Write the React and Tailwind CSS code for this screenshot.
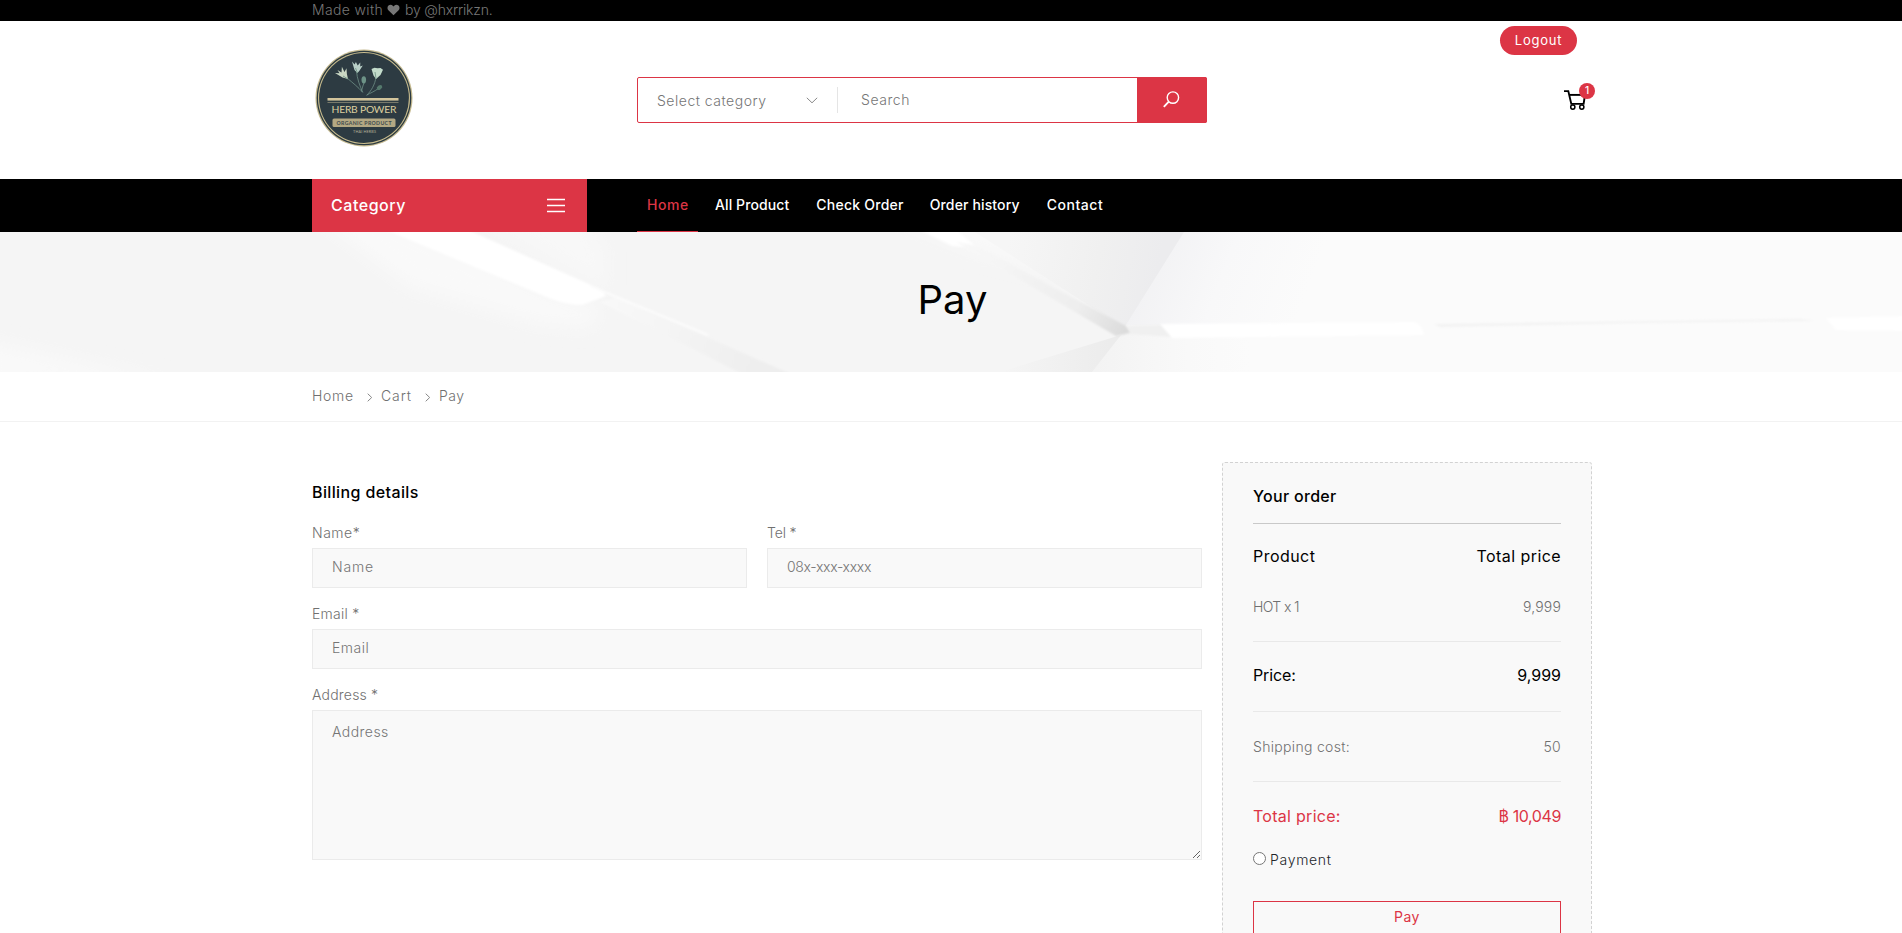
const navItems = [
  { label: "All Product", style: "ml-[17px] tracking-[0.1px]" },
  { label: "Check Order", style: "ml-[27px] tracking-[0.24px]" },
  { label: "Order history", style: "ml-[26px] tracking-[0.14px]" },
  { label: "Contact", style: "ml-[27px] tracking-[0.55px]" },
];

function Heart() {
  return (
    <svg width="13" height="12" viewBox="0 0 13 12" className="mx-[4px]">
      <path
        d="M6.500 11.300 1.400 6.300C.1 5 .2 2.600 1.500 1.400 2.900.2 4.700.5 5.800 1.700l.7.7.7-.7C8.300.5 10.100.2 11.500 1.400c1.300 1.200 1.400 3.600.1 4.900z"
        fill="#777"
      />
    </svg>
  );
}

function Logo() {
  return (
    <svg width="98" height="98" viewBox="0 0 98 98">
      <circle cx="49" cy="49" r="48.500" fill="#c4b98f" />
      <circle cx="49" cy="49" r="47.300" fill="#2b3a41" />
      <circle cx="49" cy="49" r="46" fill="#c9bd8e" />
      <circle cx="49" cy="49" r="44.900" fill="#2d3b42" />
      <g fill="none" stroke="#6f8f86" strokeWidth="0.8" strokeLinecap="round">
        <path d="M32 29 C38 34 43 38 47.500 43" />
        <path d="M41.500 22 C42 30 45 37 47.500 43" />
        <path d="M49 34 C48 37 47 39 46.500 42" />
        <path d="M61 28 C60 36 56 42 52 46" />
        <path d="M64 39 C59 43 55 44 52 46" />
      </g>
      <path
        d="M33 30 27.500 28.500 20 24l4.500.2-2-3.200 4 2.400.4-5.600 2.600 5.200 2-3.800.4 5.800z"
        fill="#cbd8c4"
      />
      <path d="M42.500 24 39.500 21l-2.500-8.500 2.600 3 1.300-2.600 1.800 3.600 2.600-3-.1 4 2.600-1-3.200 5z" fill="#b9d0c8" />
      <path d="M61 30 58.500 26.500l-2-6.500 3-1.200 3 .5 3-.3 2.500 1.800-2.500 5.200z" fill="#c3dccb" />
      <path d="M28 27l5 3M40.500 19l2 5M60 23l1 6.500" stroke="#7fa091" strokeWidth="1" />
      <ellipse cx="48.800" cy="30.800" rx="2.300" ry="3.600" fill="#6d9387" />
      <ellipse cx="64.500" cy="38.500" rx="3" ry="2.100" transform="rotate(-35 64.500 38.500)" fill="#54796c" />
      <rect x="12.500" y="49" width="71" height="2.600" fill="#d2c49b" />
      <rect x="12.500" y="53" width="71" height="0.800" fill="#8b8b76" />
      <text x="49" y="63.900" fontSize="10.300" fontWeight="400" textAnchor="middle" textLength="65" fontFamily="Lato, sans-serif" fill="#dccf9f">
        HERB POWER
      </text>
      <rect x="17.500" y="69.500" width="63" height="8.500" rx="1.500" fill="#b3a883" />
      <text x="49" y="75.700" fontSize="5.200" fontWeight="700" textAnchor="middle" textLength="55" fontFamily="Lato, sans-serif" fill="#3d4a4d">
        ORGANIC PRODUCT
      </text>
      <text x="49.500" y="83.600" fontSize="3.800" fontWeight="400" textAnchor="middle" textLength="23" fontFamily="Lato, sans-serif" fill="#b5b298">
        THAI HERBS
      </text>
    </svg>
  );
}

function Cart() {
  return (
    <svg width="22" height="20" viewBox="0 0 22 20" fill="none" stroke="#000">
      <path d="M0 1.100H4.300L7.300 13.900H19.600L21 5" strokeWidth="1.900" />
      <path d="M5.500 4.900H18" strokeWidth="1.900" />
      <circle cx="8.800" cy="17.100" r="2.100" strokeWidth="1.500" />
      <circle cx="17.800" cy="17.100" r="2.100" strokeWidth="1.500" />
    </svg>
  );
}

function BannerArt() {
  return (
    <svg width="1902" height="140" viewBox="0 0 1902 140" preserveAspectRatio="none" className="col-start-1 row-start-1">
      <defs>
        <linearGradient id="foldTop" x1="1010" x2="1160" y1="0" y2="30" gradientUnits="userSpaceOnUse">
          <stop offset="0" stopColor="#f6f6f6" />
          <stop offset="0.600" stopColor="#f0f0f0" />
          <stop offset="1" stopColor="#ececee" />
        </linearGradient>
        <linearGradient id="wallTop" x1="1140" x2="1300" y1="20" y2="80" gradientUnits="userSpaceOnUse">
          <stop offset="0" stopColor="#f1f1f3" />
          <stop offset="0.500" stopColor="#f8f8f9" />
          <stop offset="1" stopColor="#fbfbfb" />
        </linearGradient>
        <linearGradient id="foldBottom" x1="1000" x2="1110" y1="0" y2="0" gradientUnits="userSpaceOnUse">
          <stop offset="0" stopColor="#f5f5f5" />
          <stop offset="1" stopColor="#ececec" />
        </linearGradient>
        <linearGradient id="wallBottom" x1="1095" x2="1250" y1="0" y2="0" gradientUnits="userSpaceOnUse">
          <stop offset="0" stopColor="#f3f3f3" />
          <stop offset="0.600" stopColor="#f9f9f9" />
          <stop offset="1" stopColor="#fbfbfb" />
        </linearGradient>
        <linearGradient id="beam" x1="963" x2="1124" y1="13" y2="103" gradientUnits="userSpaceOnUse">
          <stop offset="0" stopColor="#f8f8f8" />
          <stop offset="0.700" stopColor="#eeeeee" />
          <stop offset="1" stopColor="#dcdcdc" />
        </linearGradient>
        <linearGradient id="tail" x1="600" x2="760" y1="70" y2="140" gradientUnits="userSpaceOnUse">
          <stop offset="0" stopColor="#f9f9f9" />
          <stop offset="1" stopColor="#eeeeee" />
        </linearGradient>
        <filter id="soft" x="-5%" y="-20%" width="110%" height="140%">
          <feGaussianBlur stdDeviation="1.200" />
        </filter>
        <filter id="haze" x="-20%" y="-40%" width="140%" height="180%">
          <feGaussianBlur stdDeviation="9" />
        </filter>
      </defs>
      <rect width="1902" height="140" fill="#f5f5f5" />
      <g filter="url(#haze)">
        <path d="M310 -20H388L549 62L600 75L590 96L540 92L410 55Z" fill="#f9f9f9" />
        <path d="M470 -20H580L605 20V55Z" fill="#f8f8f8" />
        <path d="M-20 108L170 150H-20Z" fill="#f9f9f9" />
        <path d="M880 -20H1010L1060 40L980 20Z" fill="#f9f9f9" />
      </g>
      <path d="M1124 93L1184 0H1902V93Z" fill="url(#wallTop)" />
      <path d="M1121 93L1092 140H1902V93Z" fill="url(#wallBottom)" />
      <path d="M975 0H1184L1124 96Z" fill="url(#foldTop)" />
      <path d="M1121 103L1092 140H1000Z" fill="url(#foldBottom)" />
      <g filter="url(#soft)">
        <path d="M600 70L618 66L800 146H750Z" fill="url(#tail)" />
        <path d="M386 -2H468L600 57L606 64L582 73Q566 73 549 66Z" fill="#fff" />
        <path d="M590 54L708 103" stroke="#fcfcfc" strokeWidth="2" />
        <path d="M920 -2H956L978 16L952 14Z" fill="#fff" />
        <path d="M956 10L974 13L1126 94L1130 101L1116 104Z" fill="url(#beam)" />
        <path d="M1128 94L1163 93L1172 105L1130 102Z" fill="#f0f0f0" />
        <path d="M1160 92L1414 90Q1422 92 1424 103L1172 106Z" fill="#fff" />
        <path d="M1434 92L1800 87L1815 89L1640 91L1440 95Z" fill="#f3f3f3" />
        <path d="M1826 86L1904 84V99L1836 98Z" fill="#fff" />
      </g>
    </svg>
  );
}

function CrumbArrow() {
  return (
    <svg width="6" height="9" viewBox="0 0 6 9" className="mt-[3px] mr-[8px]" fill="none" stroke="#888" strokeWidth="1">
      <path d="M0.700 0.700L4.700 4.500L0.700 8.300" />
    </svg>
  );
}

const labelBase = "block h-6 leading-6 mb-[3px] ";
const inputBase =
  "block h-10 w-full border border-[#ebebeb] bg-[#f9f9f9] pb-[3px] pl-[19px] font-light text-sm outline-none placeholder:text-[#757575] ";

export default function App() {
  return (
    <div className="h-[933px] overflow-hidden bg-white font-['Inter','Liberation_Sans',sans-serif] text-sm font-light text-[#707070]">
      <div className="h-[21px] bg-black">
        <div className="ml-[312px] flex h-[20px] items-center text-[#777]">
          <span className="tracking-[0.35px]">Made with</span>
          <Heart />
          <span className="ml-px tracking-[-0.19px]">by @hxrrikzn.</span>
        </div>
      </div>

      <header className="ml-[312px] flex h-[158px] w-[1280px]">
        <div className="w-[325px] pt-[28px] pl-[3px]">
          <Logo />
        </div>
        <div className="mt-[56px] flex h-[46px] w-[570px] rounded-[2px] border border-[#dc3545]">
          <div className="mt-[9px] flex h-[26px] w-[200px] shrink-0 items-center border-r border-[#e5e5e5] pl-[19px]">
            <span className="mt-[2px] w-[149px] tracking-[0.51px] text-[#757575]">Select category</span>
            <svg width="12" height="7" viewBox="0 0 12 7" fill="none" stroke="#888" strokeWidth="1">
              <path d="M0.800 0.800L6 5.800L11.200 0.800" />
            </svg>
          </div>
          <input
            placeholder="Search"
            className="w-[299px] shrink-0 pl-[23px] text-sm font-light tracking-[0.56px] outline-none placeholder:text-[#757575]"
          />
          <button className="-my-px -mr-px flex w-[70px] shrink-0 items-center justify-center rounded-r-[2px] bg-[#dc3545] pr-[2px]">
            <svg width="17" height="17" viewBox="0 0 17 17" fill="none" stroke="#fff" strokeWidth="1.400" className="mb-[1px]">
              <circle cx="9.900" cy="6.600" r="5.700" />
              <path d="M5.800 10.700L0.800 15.900" strokeWidth="1.900" />
            </svg>
          </button>
        </div>
        <div className="flex flex-1 flex-col items-end">
          <button className="mt-[5px] mr-[15px] h-[29px] w-[77px] rounded-full bg-[#dc3545] text-[13px] font-normal tracking-[0.75px] text-white">
            Logout
          </button>
          <div className="relative mt-[35px] mr-[6px]">
            <Cart />
            <span className="absolute -top-[7px] left-[15px] flex size-4 items-center justify-center rounded-full bg-[#dc3545] pb-px text-[10px] font-medium text-white">
              1
            </span>
          </div>
        </div>
      </header>

      <nav className="h-[53px] bg-black">
        <div className="ml-[312px] flex h-full items-center text-sm font-medium text-white">
          <div className="flex h-full w-[275px] items-center justify-between bg-[#dc3545] pr-[22px] pl-[19px] text-base">
            <span className="pb-[2px] tracking-[0.53px]">Category</span>
            <svg width="18" height="16" viewBox="0 0 18 16" stroke="#fff" strokeWidth="1.700">
              <path d="M0 1.500H18M0 7.500H18M0 13.500H18" />
            </svg>
          </div>
          <div className="ml-[50px] flex h-full w-[61px] items-center border-b border-[#dc3545] pl-[10px] tracking-[0.55px] text-[#dc3545]">
            Home
          </div>
          {navItems.map((item) => (
            <span key={item.label} className={item.style + " pb-[2px]"}>
              {item.label}
            </span>
          ))}
        </div>
      </nav>

      <div className="grid h-[140px] grid-cols-[1902px]">
        <BannerArt />
        <h1 className="z-10 col-start-1 row-start-1 self-center pb-[4px] pl-[3px] text-center text-[40px] leading-none font-normal text-black">
          Pay
        </h1>
      </div>

      <div className="flex h-[50px] items-center border-b border-[#f2f2f2] pb-[2px] pl-[312px]">
        <span className="w-[55px] tracking-[0.7px]">Home</span>
        <CrumbArrow />
        <span className="w-[44px] tracking-[0.9px]">Cart</span>
        <CrumbArrow />
        <span className="tracking-[0.5px]">Pay</span>
      </div>

      <main className="ml-[312px] flex w-[1280px] gap-5 pt-10">
        <form className="w-[890px] pt-[18px]">
          <h2 className="mb-[17px] h-6 text-base leading-6 font-medium tracking-[0.38px] text-black">Billing details</h2>
          <div className="mb-[14px] grid grid-cols-2 gap-5">
            <label>
              <span className={labelBase + "tracking-[0.5px]"}>Name*</span>
              <input placeholder="Name" className={inputBase + "tracking-[0.8px]"} />
            </label>
            <label>
              <span className={labelBase + "tracking-[-0.13px]"}>Tel *</span>
              <input placeholder="08x-xxx-xxxx" className={inputBase + "tracking-[-0.34px]"} />
            </label>
          </div>
          <label>
            <span className={labelBase + "tracking-[0.25px]"}>Email *</span>
            <input placeholder="Email" className={inputBase + "mb-[14px] tracking-[0.5px]"} />
          </label>
          <label>
            <span className={labelBase + "tracking-[0.2px]"}>Address *</span>
            <textarea
              placeholder="Address"
              className="block h-[150px] w-full border border-[#ebebeb] bg-[#f9f9f9] pt-[9px] pl-[19px] text-sm leading-6 font-light tracking-[0.45px] outline-none placeholder:text-[#757575]"
            />
          </label>
        </form>

        <aside className="h-[520px] w-[370px] rounded-[3px] border border-dashed border-[#d2d2d2] bg-[#f9f9f9] px-[30px] leading-6">
          <h2 className="h-[61px] border-b border-[#c9c9c9] pt-[21px] text-base leading-6 font-medium tracking-[0.3px] text-black">
            Your order
          </h2>
          <div className="mt-[20px] flex justify-between text-base leading-6 font-normal text-black">
            <span className="tracking-[0.45px]">Product</span>
            <span className="tracking-[0.42px]">Total price</span>
          </div>
          <div className="mt-[27px] flex h-[47px] justify-between border-b border-[#e9e9e9]">
            <span className="tracking-[-0.6px]">HOT x 1</span>
            <span className="tracking-[0.16px]">9,999</span>
          </div>
          <div className="flex h-[70px] justify-between border-b border-[#e9e9e9] pt-[21px] text-base leading-6 font-normal text-black">
            <span className="tracking-[-0.1px]">Price:</span>
            <span>9,999</span>
          </div>
          <div className="flex h-[70px] justify-between border-b border-[#e9e9e9] pt-[23px]">
            <span className="tracking-[0.32px]">Shipping cost:</span>
            <span className="tracking-[0.3px]">50</span>
          </div>
          <div className="flex justify-between pt-[22px] text-base leading-6 font-normal text-[#dc3545]">
            <span className="tracking-[0.28px]">Total price:</span>
            <span className="tracking-[-0.4px]">฿ 10,049</span>
          </div>
          <label className="mt-[20px] flex h-6 items-center text-[#212529]">
            <input type="radio" className="mr-[4px] mb-[3px] size-[13px]" />
            <span className="tracking-[0.7px]">Payment</span>
          </label>
          <button className="mt-[29px] block h-[33px] w-full border border-[#dc3545] pb-[2px] text-sm font-normal tracking-[0.51px] text-[#dc3545]">
            Pay
          </button>
        </aside>
      </main>
    </div>
  );
}
